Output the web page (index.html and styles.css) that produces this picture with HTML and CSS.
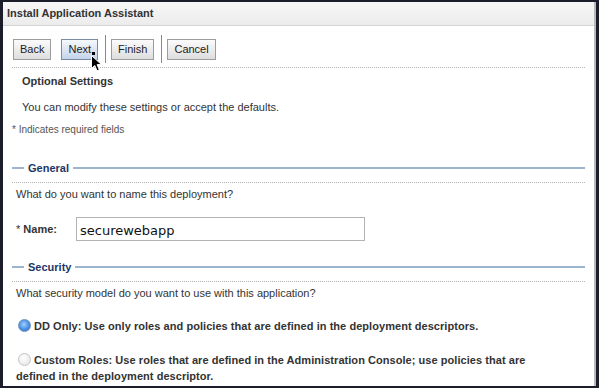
FILE: index.html
```html
<!DOCTYPE html>
<html>
<head>
    <meta charset="UTF-8">
    <title>Install Application Assistant</title>
    <link rel="stylesheet" href="styles.css">
</head>
<body>
<div class="window">
    <div class="title">Install Application Assistant</div>
    <div class="content">
        <div class="toolbar">
            <button class="btn">Back</button>
            <span class="hover-wrap">
                <button class="btn hover">Next</button>
                <span class="dot"></span>
                <svg class="cursor" width="12" height="18" viewBox="0 0 12 18">
                    <path d="M0.5 0.5 L0.5 13.5 L3.8 10.5 L6 15.8 L8.3 14.8 L6.1 9.6 L10.5 9.6 Z" fill="#000" stroke="#fff" stroke-width="1"/>
                </svg>
            </span>
            <span class="sep"></span>
            <button class="btn">Finish</button>
            <span class="sep"></span>
            <button class="btn">Cancel</button>
        </div>
        <div class="intro">
            <h2>Optional Settings</h2>
            <p>You can modify these settings or accept the defaults.</p>
        </div>
        <p class="required">* Indicates required fields</p>

        <div class="section">
            <div class="legend"><span>General</span></div>
            <p class="question">What do you want to name this deployment?</p>
            <div class="field">
                <label><span class="star">*</span> Name:</label>
                <input type="text" value="securewebapp">
            </div>
        </div>

        <div class="section security">
            <div class="legend"><span>Security</span></div>
            <p class="question">What security model do you want to use with this application?</p>
            <p class="option"><span class="radio checked"></span>DD Only: Use only roles and policies that are defined in the deployment descriptors.</p>
            <p class="option"><span class="radio"></span>Custom Roles: Use roles that are defined in the Administration Console; use policies that are defined in the deployment descriptor.</p>
        </div>
    </div>
</div>
</body>
</html>
```

FILE: styles.css
```css
* {
    margin: 0;
    padding: 0;
    box-sizing: border-box;
}

html, body {
    height: 100%;
    overflow: hidden;
}

body {
    background: #1b1d2b;
    font-family: "Liberation Sans", Arial, sans-serif;
    font-size: 11px;
    color: #333;
}

.window {
    margin: 2px 3px 0 3px;
    height: 384px;
    background: #fff;
    border-right: 2px solid #b9b9b9;
}

.title {
    height: 24px;
    line-height: 23px;
    padding-left: 4px;
    font-weight: bold;
    font-size: 11px;
    color: #333;
    background: linear-gradient(#f7f7f7, #ececec);
    border-bottom: 1px solid #d4d4d4;
}

.content {
    padding: 0 6px 0 9px;
}

.toolbar {
    display: flex;
    align-items: center;
    height: 42px;
    padding-top: 5px;
    border-bottom: 1px dotted #b5b5b5;
    margin-right: 3px;
}

.btn {
    height: 21px;
    padding: 0 6px;
    font-family: "Liberation Sans", Arial, sans-serif;
    font-size: 11px;
    color: #222;
    background: linear-gradient(#fbfbfb, #dedede);
    border: 1px solid #9c9c9c;
    margin-left: 1px;
}

.btn + .hover-wrap {
    margin-left: 9px;
}

.hover-wrap {
    position: relative;
    display: flex;
}

.btn.hover {
    background: linear-gradient(#f6f8fc, #c4d4ec);
    border-color: #7a8aa4;
}

.dot {
    position: absolute;
    left: 32px;
    top: 13px;
    width: 3px;
    height: 3px;
    background: #000;
}

.cursor {
    position: absolute;
    left: 31px;
    top: 16px;
}

.sep {
    width: 1px;
    height: 28px;
    background: #888;
    margin: 0 4px 0 7px;
}

.intro {
    padding: 6px 0 0 10px;
}

.intro h2 {
    font-size: 11px;
    font-weight: bold;
    color: #333;
    line-height: 15px;
}

.intro p {
    margin-top: 11px;
    line-height: 15px;
}

.required {
    margin-top: 8px;
    font-size: 10px;
    color: #555;
    line-height: 13px;
}

.section {
    margin-top: 30px;
}

.section.security {
    margin-top: 24px;
}

.legend {
    display: flex;
    align-items: center;
    height: 4px;
    padding-bottom: 12px;
    box-sizing: content-box;
    margin-right: 3px;
    border-bottom: 1px dotted #b5b5b5;
}

.legend:before, .legend:after {
    content: "";
    height: 2px;
    background: #9db4cf;
}

.legend:before {
    width: 12px;
}

.legend:after {
    flex: 1;
}

.legend span {
    padding: 0 4px;
    font-weight: bold;
    font-size: 11px;
    color: #1c3766;
}

.question {
    margin: 4px 0 0 4px;
    line-height: 15px;
}

.field {
    display: flex;
    align-items: center;
    margin: 15px 0 0 4px;
}

.field label {
    width: 60px;
    font-weight: bold;
    font-size: 11px;
}

.star {
    font-weight: normal;
}

.field input {
    width: 289px;
    height: 24px;
    border: 1px solid #b3b3b3;
    padding: 2px 3px 0;
    font-family: "DejaVu Sans", sans-serif;
    font-size: 13px;
    color: #111;
}

.option {
    max-width: 520px;
    margin: 17px 0 0 4px;
    font-weight: bold;
    letter-spacing: 0.05px;
    line-height: 16px;
}

.option + .option {
    margin-top: 18px;
}

.radio {
    display: inline-block;
    vertical-align: -2px;
    width: 13px;
    height: 13px;
    margin: 0 3px 0 2px;
    border-radius: 50%;
    border: 1px solid #c3c3c3;
    background: radial-gradient(circle at 40% 35%, #fff, #e2e2e2);
}

.radio.checked {
    border-color: #6c8fbf;
    background: radial-gradient(circle at 45% 40%, #9fd0ff 0, #4a90e2 55%, #2f6cc0 100%);
}
```
